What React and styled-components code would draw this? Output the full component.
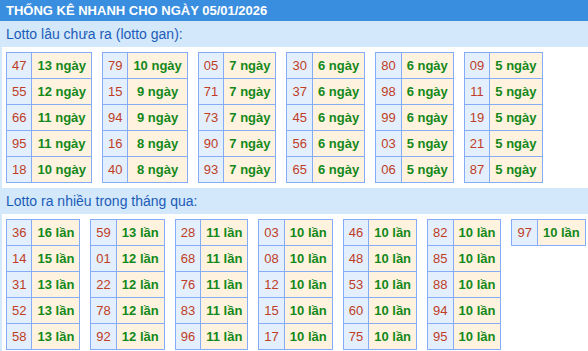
import styled, { createGlobalStyle } from "styled-components";

const GlobalStyle = createGlobalStyle`
  html, body {
    margin: 0;
    padding: 0;
    background: #fff;
    font-family: "Liberation Sans", Arial, sans-serif;
  }
`;

const Header = styled.div`
  height: 21px;
  line-height: 21px;
  padding-left: 6px;
  background: #3a8ee0;
  color: #fff;
  font-size: 13px;
  font-weight: bold;
  white-space: nowrap;
`;

const Body = styled.div`
  border-left: 2px solid #d4e8fb;
`;

const SubTitle = styled.div`
  height: 26px;
  line-height: 26px;
  padding-left: 4px;
  background: #d4e8fb;
  color: #1b5cb8;
  font-size: 14px;
`;

const TableRow = styled.div`
  display: flex;
  align-items: flex-start;
  gap: 10px;
  padding: 5px 4px;
`;

const Table = styled.table`
  border-collapse: collapse;
  font-size: 13px;
  td {
    border: 1px solid #85acf7;
    padding: 5px 5px;
    line-height: 15px;
    text-align: center;
    white-space: nowrap;
  }
`;

const Num = styled.td`
  background: #e3effd;
  color: #bf3d26;
`;

const Val = styled.td`
  background: #fff3df;
  color: #14881a;
  font-weight: bold;
`;

const gan = [
  [["47", 13], ["55", 12], ["66", 11], ["95", 11], ["18", 10]],
  [["79", 10], ["15", 9], ["94", 9], ["16", 8], ["40", 8]],
  [["05", 7], ["71", 7], ["73", 7], ["90", 7], ["93", 7]],
  [["30", 6], ["37", 6], ["45", 6], ["56", 6], ["65", 6]],
  [["80", 6], ["98", 6], ["99", 6], ["03", 5], ["06", 5]],
  [["09", 5], ["11", 5], ["19", 5], ["21", 5], ["87", 5]],
];

const nhieu = [
  [["36", 16], ["14", 15], ["31", 13], ["52", 13], ["58", 13]],
  [["59", 13], ["01", 12], ["22", 12], ["78", 12], ["92", 12]],
  [["28", 11], ["68", 11], ["76", 11], ["83", 11], ["96", 11]],
  [["03", 10], ["08", 10], ["12", 10], ["15", 10], ["17", 10]],
  [["46", 10], ["48", 10], ["53", 10], ["60", 10], ["75", 10]],
  [["82", 10], ["85", 10], ["88", 10], ["94", 10], ["95", 10]],
  [["97", 10]],
];

function StatTable({ rows, unit }) {
  return (
    <Table>
      <tbody>
        {rows.map(([n, v]) => (
          <tr key={n}>
            <Num>{n}</Num>
            <Val>
              {v} {unit}
            </Val>
          </tr>
        ))}
      </tbody>
    </Table>
  );
}

export default function App() {
  return (
    <>
      <GlobalStyle />
      <Header>THỐNG KÊ NHANH CHO NGÀY 05/01/2026</Header>
      <Body>
        <SubTitle>Lotto lâu chưa ra (lotto gan):</SubTitle>
        <TableRow>
          {gan.map((rows, i) => (
            <StatTable key={i} rows={rows} unit="ngày" />
          ))}
        </TableRow>
        <SubTitle>Lotto ra nhiều trong tháng qua:</SubTitle>
        <TableRow>
          {nhieu.map((rows, i) => (
            <StatTable key={i} rows={rows} unit="lần" />
          ))}
        </TableRow>
      </Body>
    </>
  );
}
